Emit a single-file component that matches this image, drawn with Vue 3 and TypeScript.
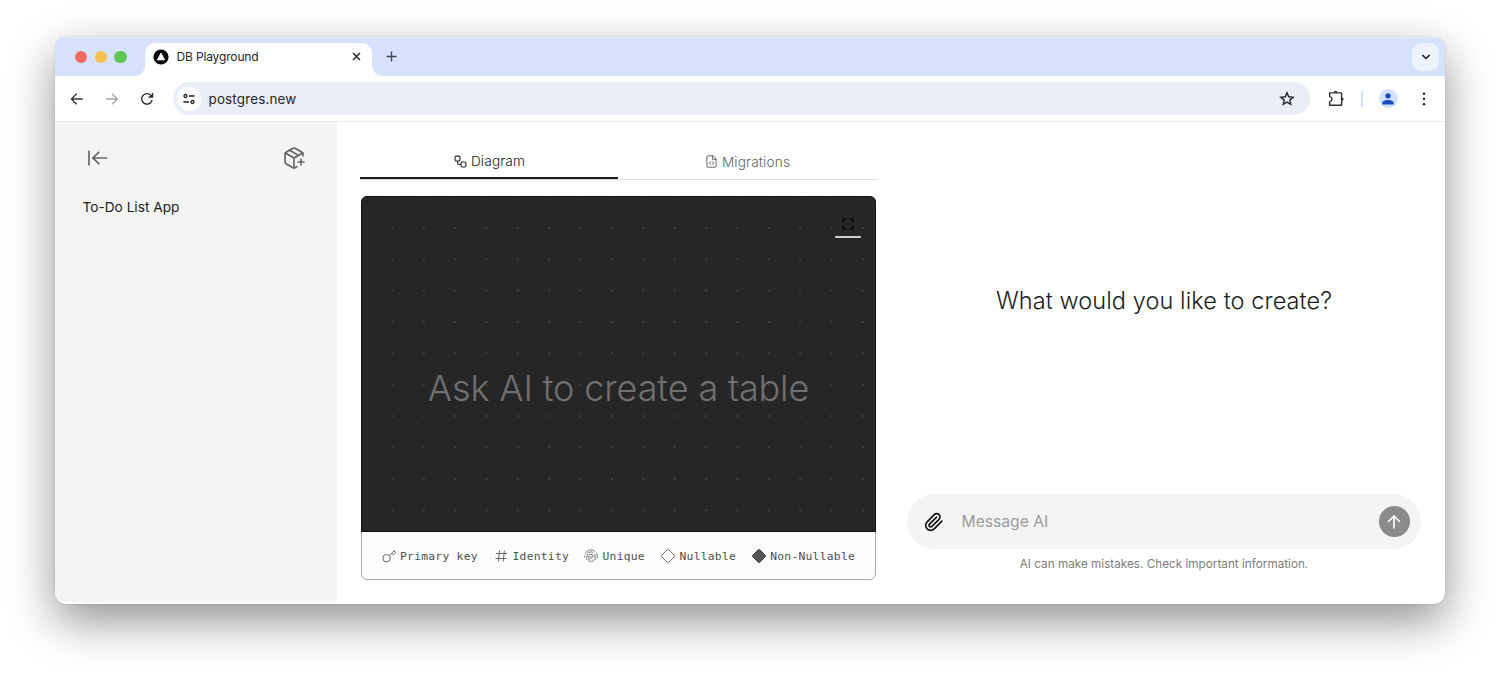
<script setup lang="ts">
interface LegendItem {
  icon: 'key' | 'hash' | 'finger' | 'open' | 'solid'
  label: string
  width: number
}
const legend: LegendItem[] = [
  { icon: 'key', label: 'Primary key', width: 112.5 },
  { icon: 'hash', label: 'Identity', width: 90 },
  { icon: 'finger', label: 'Unique', width: 77 },
  { icon: 'open', label: 'Nullable', width: 90.7 },
  { icon: 'solid', label: 'Non-Nullable', width: 105 },
]
</script>

<template>
  <div class="page">
    <div class="window">
      <header class="tabstrip">
        <div class="lights"><i class="red"></i><i class="yellow"></i><i class="green"></i></div>
        <div class="tab">
          <svg class="favicon" viewBox="0 0 16 16"><circle cx="8" cy="8" r="7.6" fill="#050607" /><path d="M8 4.1 11.7 10.9H4.3Z" fill="#fff" stroke="#fff" stroke-width=".8" stroke-linejoin="round" /></svg>
          <span class="tab-title">DB Playground</span>
          <svg class="close" viewBox="0 0 9 9"><path d="M1 1 8 8M8 1 1 8" stroke="#202020" stroke-width="1.4" /></svg>
        </div>
        <svg class="plus" viewBox="0 0 11 11"><path d="M5.5 .5v10M.5 5.5h10" stroke="#454950" stroke-width="1.4" /></svg>
        <div class="chevron"><svg viewBox="0 0 10 6"><path d="M1.3 1 5 4.5 8.7 1" fill="none" stroke="#161a20" stroke-width="1.5" /></svg></div>
      </header>

      <nav class="toolbar">
        <svg class="nav-icon" viewBox="0 0 14 14"><path d="M12.7 7H1.600M6.700 1.700 1.400 7l5.300 5.300" stroke="#33363a" /></svg>
        <svg class="nav-icon forward" viewBox="0 0 14 14"><path d="M1 7h11.2M7 1.700 12.300 7 7 12.300" stroke="#a4a6aa" /></svg>
        <svg class="nav-icon reload" viewBox="0 0 14 14"><path d="M12.1 8.2A5.3 5.3 0 1 1 10.8 3.2L12.5 5M12.5 1v4H8.6" stroke="#242628" /></svg>
        <div class="address">
          <div class="site-info">
            <svg viewBox="0 0 12 12"><g fill="none" stroke="#202226" stroke-width="1.3"><circle cx="2.5" cy="3" r="1.5" /><path d="M6 3h5.6M.4 9H6" /><circle cx="9.5" cy="9" r="1.5" /></g></svg>
          </div>
          <span class="url">postgres.new</span>
          <svg class="star" viewBox="0 0 16 16"><path d="M8 1.7 9.7 5.8 14.2 6.2 10.8 9.1 11.8 13.4 8 11.1 4.2 13.4 5.2 9.1 1.8 6.2 6.3 5.8Z" fill="none" stroke="#26282c" stroke-width="1.4" stroke-linejoin="miter" /></svg>
        </div>
        <svg class="puzzle" viewBox="0 0 18 18"><path d="M2.600 2.900H14.600V15.200H2.600V11.900Q5 11.200 5 9.200T2.600 6.400Z" fill="none" stroke="#2b2e31" stroke-width="1.4" stroke-linejoin="round" /><path d="M6.900 2.600a1.800 1.800 0 0 1 3.600 0ZM14.900 7.400a1.700 1.700 0 0 1 0 3.400Z" fill="#2b2e31" /></svg>
        <i class="divider"></i>
        <div class="avatar"><svg viewBox="0 0 12 12"><circle cx="6" cy="2.800" r="2.600" fill="#1649c4" /><path d="M.3 11.400V10C.3 6 11.7 6 11.7 10v1.400Z" fill="#1649c4" /></svg></div>
        <svg class="kebab" viewBox="0 0 4 14"><g fill="#26282b"><circle cx="2" cy="1.700" r="1.250" /><circle cx="2" cy="7" r="1.250" /><circle cx="2" cy="12.300" r="1.250" /></g></svg>
      </nav>

      <main class="content">
        <aside class="sidebar">
          <div class="side-icons">
            <svg class="collapse" viewBox="0 0 20 16"><path d="M1 .5v15M19.3 8H4.8M11.3 1.8 4.8 8l6.5 6.2" fill="none" stroke="#676767" stroke-width="1.7" /></svg>
            <svg class="package" viewBox="0 0 24 24"><g fill="none" stroke="#626262" stroke-width="1.6" stroke-linecap="round" stroke-linejoin="round"><path d="M16 16h6M19 13v6M21 10V8a2 2 0 0 0-1-1.73l-7-4a2 2 0 0 0-2 0l-7 4A2 2 0 0 0 3 8v8a2 2 0 0 0 1 1.73l7 4a2 2 0 0 0 2 0l2-1.14" /><path d="m7.5 4.27 9 5.15M3.29 7 12 12l8.71-5M12 22V12" /></g></svg>
          </div>
          <div class="project">To-Do List App</div>
        </aside>

        <section class="workspace">
          <div class="tabs">
            <div class="view-tab active">
              <svg viewBox="0 0 24 24"><g fill="none" stroke="currentColor" stroke-width="2" stroke-linejoin="round"><rect x="2" y="2" width="9" height="9" rx="2" /><path d="M6.5 11v3.5a3 3 0 0 0 3 3H13" /><rect x="13" y="13" width="9" height="9" rx="2" /></g></svg>
              <span>Diagram</span>
            </div>
            <div class="view-tab">
              <svg viewBox="0 0 24 24"><g fill="none" stroke="currentColor" stroke-width="1.8" stroke-linecap="round" stroke-linejoin="round"><path d="M14.500 1.500H5.500a2 2 0 0 0-2 2v17a2 2 0 0 0 2 2h13a2 2 0 0 0 2-2V7.500Z" /><path d="M14 2v6h6M10 12.500 8 15l2 2.500M14 12.500l2 2.500-2 2.500" /></g></svg>
              <span>Migrations</span>
            </div>
          </div>
          <div class="diagram">
            <div class="canvas">
              <svg class="dots" width="513" height="334">
                <defs><pattern id="grid-dots" x="14.7" y="15.2" width="31.37" height="31.37" patternUnits="userSpaceOnUse"><circle cx="15.7" cy="15.7" r=".9" fill="#4c4c4c" /></pattern></defs>
                <rect width="513" height="334" fill="url(#grid-dots)" />
              </svg>
              <div class="fit"><svg viewBox="0 0 12 12"><path d="M1 4V2a1 1 0 0 1 1-1h2M8 1h2a1 1 0 0 1 1 1v2M11 8v2a1 1 0 0 1-1 1H8M4 11H2a1 1 0 0 1-1-1V8" fill="none" stroke="#050505" stroke-width="1.5" /></svg></div>
              <div class="prompt">Ask AI to create a table</div>
            </div>
            <div class="legend">
              <div v-for="item in legend" :key="item.label" class="legend-item" :style="{ width: item.width + 'px' }">
                <svg viewBox="0 0 14 14">
                  <g v-if="item.icon === 'key'" fill="none" stroke="#666"><circle cx="4.600" cy="9.200" r="3.700" /><path d="M7.300 6.600 12.600 1.300M9.600 4.300l1.600 1.600 2.300-2.300-1.600-1.600" /></g>
                  <path v-else-if="item.icon === 'hash'" d="M2 4.500h11M1.500 9.500h11M5.600 1.500 4.400 12.500M10.400 1.500 9.200 12.500" fill="none" stroke="#666" />
                  <g v-else-if="item.icon === 'finger'" fill="none" stroke="#666" stroke-width=".85"><path d="M.7 8.500V6.700M1.300 4.600A6.300 6.300 0 0 1 11.200 2.300M12.300 3.700A6.300 6.300 0 0 1 13.300 7v2M2.900 11V7a4.100 4.100 0 0 1 6.300-3.500M10.500 4.800A4.100 4.100 0 0 1 11.100 7v4M5 13V7.200a2 2 0 0 1 4 0V9M9 10.500V13M7 7v3M7 11.500V13.300" /></g>
                  <path v-else d="M6.200 .8Q7 .1 7.800 .8L13.200 6.200Q13.900 7 13.200 7.800L7.800 13.200Q7 13.900 6.200 13.200L.8 7.800Q.1 7 .8 6.200Z" :fill="item.icon === 'solid' ? '#555' : 'none'" :stroke="item.icon === 'solid' ? '#333' : '#666'" stroke-width=".9" />
                </svg>
                <span>{{ item.label }}</span>
              </div>
            </div>
          </div>
        </section>

        <section class="chat">
          <h1>What would you like to create?</h1>
          <div class="composer">
            <svg class="clip" viewBox="0 0 24 24"><path d="m21.440 11.050-9.190 9.190a6 6 0 0 1-8.490-8.490l8.570-8.570A4 4 0 1 1 18 8.840l-8.590 8.570a2 2 0 0 1-2.830-2.830l8.490-8.480" fill="none" stroke="#111" stroke-width="2" stroke-linecap="round" stroke-linejoin="round" /></svg>
            <span class="placeholder">Message AI</span>
            <div class="send"><svg viewBox="0 0 14 14"><path d="M7 13.500V1.200M1 7l6-6 6 6" fill="none" stroke="#fff" stroke-width="1.700" /></svg></div>
          </div>
          <div class="note">AI can make mistakes. Check important information.</div>
        </section>
      </main>
    </div>
  </div>
</template>

<style>
body { background: #fff; overflow: hidden; }
</style>

<style scoped>
.page { box-sizing: border-box; width: 1500px; height: 676px; padding: 37px 55px 0; font-family: Inter, "Liberation Sans", sans-serif; background: #fff; }
svg { display: block; flex: none; }
.window { width: 1390px; height: 567px; border-radius: 11px; overflow: hidden; background: #fff; box-shadow: 0 0 1px rgba(0, 0, 0, .45), 0 17px 46px rgba(0, 0, 0, .43); display: flex; flex-direction: column; }
.tabstrip { height: 39px; flex: none; display: flex; align-items: flex-start; background: #d6e2fb; box-shadow: inset 0 1px #e5edfa; }
.lights { display: flex; gap: 7.400px; padding: 14px 0 0 20px; width: 70px; }
.lights i { width: 12.300px; height: 12.300px; border-radius: 50%; }
.red { background: #ed695e; } .yellow { background: #f5bf4f; } .green { background: #61c554; }
.tab { position: relative; box-sizing: border-box; width: 227px; height: 33px; margin-top: 6px; padding: 0 11px 6px 8px; border-radius: 10px 10px 0 0; background: #fff; display: flex; align-items: center; }
.tab::before, .tab::after { content: ""; position: absolute; bottom: 0; width: 10px; height: 10px; }
.tab::before { left: -10px; background: radial-gradient(circle at 0 0, transparent 9.500px, #fff 10px); }
.tab::after { right: -10px; background: radial-gradient(circle at 100% 0, transparent 9.500px, #fff 10px); }
.favicon { width: 16px; height: 16px; }
.tab-title { margin-left: 7.500px; font-size: 12px; letter-spacing: -.15px; color: #25282d; flex: 1; }
.close { width: 9px; height: 9px; }
.plus { width: 11px; height: 11px; margin: 14px 0 0 14px; }
.chevron { width: 27px; height: 28px; border-radius: 9px; background: #edf3fd; margin: 6px 6px 0 auto; display: grid; place-items: center; }
.chevron svg { width: 10px; height: 6px; }
.toolbar { height: 46px; flex: none; box-sizing: border-box; border-bottom: 1.500px solid #e9e9eb; display: flex; align-items: center; background: #fff; padding-left: 14.500px; }
.nav-icon { width: 14px; height: 14px; fill: none; stroke-width: 1.350; }
.forward { margin-left: 21px; }
.reload { margin-left: 21px; }
.address { width: 1137px; height: 33px; border-radius: 17px; background: #e9edf6; margin-left: 19px; display: flex; align-items: center; box-sizing: border-box; padding: 0 15px 0 4px; }
.site-info { width: 24px; height: 24px; border-radius: 50%; background: #fff; display: grid; place-items: center; }
.site-info svg { width: 12px; height: 12px; }
.url { margin-left: 8px; font-size: 13.400px; letter-spacing: .18px; color: #24272c; flex: 1; }
.star { width: 16px; height: 16px; }
.puzzle { width: 18px; height: 18px; margin-left: 17px; }
.divider { width: 2px; height: 16px; margin-left: 16px; background: #d1e1fd; }
.avatar { width: 19px; height: 19px; border-radius: 50%; background: #d3e2fc; margin-left: 16px; display: grid; place-items: center; }
.avatar svg { width: 12px; height: 12px; }
.kebab { width: 4px; height: 14px; margin-left: 24px; }
.content { flex: 1; display: flex; min-height: 0; }
.sidebar { width: 282px; height: 480px; background: #f4f4f4; flex: none; }
.side-icons { display: flex; justify-content: space-between; align-items: center; padding: 24px 31px 0 33px; }
.collapse { width: 20px; height: 16px; }
.package { width: 24px; height: 24px; }
.project { margin: 28px 0 0 27.500px; font-size: 13.700px; line-height: 18px; letter-spacing: -.01px; color: #222; }
.workspace { width: 515px; margin-left: 24px; padding-top: 23px; flex: none; }
.tabs { display: grid; grid-template-columns: 1fr 1fr; height: 35px; box-sizing: border-box; border-bottom: 1px solid #dedede; margin-left: -1px; }
.view-tab { display: flex; align-items: center; justify-content: center; gap: 4px; font-size: 13.700px; font-weight: 300; color: #626262; box-sizing: border-box; height: 33px; letter-spacing: .15px; padding-left: 1px; }
.view-tab svg { width: 13px; height: 13px; }
.view-tab.active { height: 34px; color: #222; border-bottom: 2px solid #171d17; }
.diagram { box-sizing: border-box; width: 515px; height: 384px; margin-top: 16px; border: 1px solid #aaa; border-radius: 6px; background: #fcfcfc; }
.canvas { position: relative; box-sizing: border-box; width: 515px; height: 336px; margin: -1px; border: 1px solid #111; background: #262626; display: flex; justify-content: center; align-items: flex-end; border-radius: 6px 6px 0 0; }
.dots { position: absolute; inset: 0; }
.fit { position: absolute; right: 14px; top: 14px; width: 26px; height: 27px; box-sizing: border-box; border-bottom: 2px solid #cdd0cd; display: grid; place-items: center; border-radius: 1px; }
.fit svg { width: 12px; height: 12px; }
.prompt { position: relative; margin-bottom: 120px; font-size: 36px; line-height: 46px; font-weight: 300; letter-spacing: -.12px; color: #707070; white-space: nowrap; }
.legend { display: flex; align-items: center; height: 48px; padding-left: 19.500px; font-family: "DejaVu Sans Mono", "Liberation Mono", monospace; font-size: 11.300px; letter-spacing: .27px; color: #505050; margin-top: 1px; }
.legend-item { display: flex; align-items: center; gap: 4.500px; white-space: nowrap; flex: none; }
.legend-item svg { width: 14px; height: 14px; }
.chat { width: 514px; margin-left: 31px; display: flex; flex-direction: column; align-items: center; }
h1 { margin: 164px 0 0; font-size: 23.500px; line-height: 30px; font-weight: 300; letter-spacing: .09px; color: #1c1c1c; white-space: nowrap; }
.composer { width: 514px; height: 55px; border-radius: 28px; background: #f4f4f4; margin-top: 178px; box-sizing: border-box; display: flex; align-items: center; padding: 0 11.500px 0 17px; }
.clip { width: 20px; height: 20px; }
.placeholder { flex: 1; margin-left: 17.500px; font-size: 15.700px; color: #9b9b9b; letter-spacing: -.03px; }
.send { width: 31px; height: 31px; border-radius: 50%; background: #8b8b8b; display: grid; place-items: center; }
.send svg { width: 14px; height: 14px; }
.note { margin-top: 8px; font-size: 11.700px; line-height: 15px; color: #7c7c7c; letter-spacing: .02px; white-space: nowrap; }
</style>
